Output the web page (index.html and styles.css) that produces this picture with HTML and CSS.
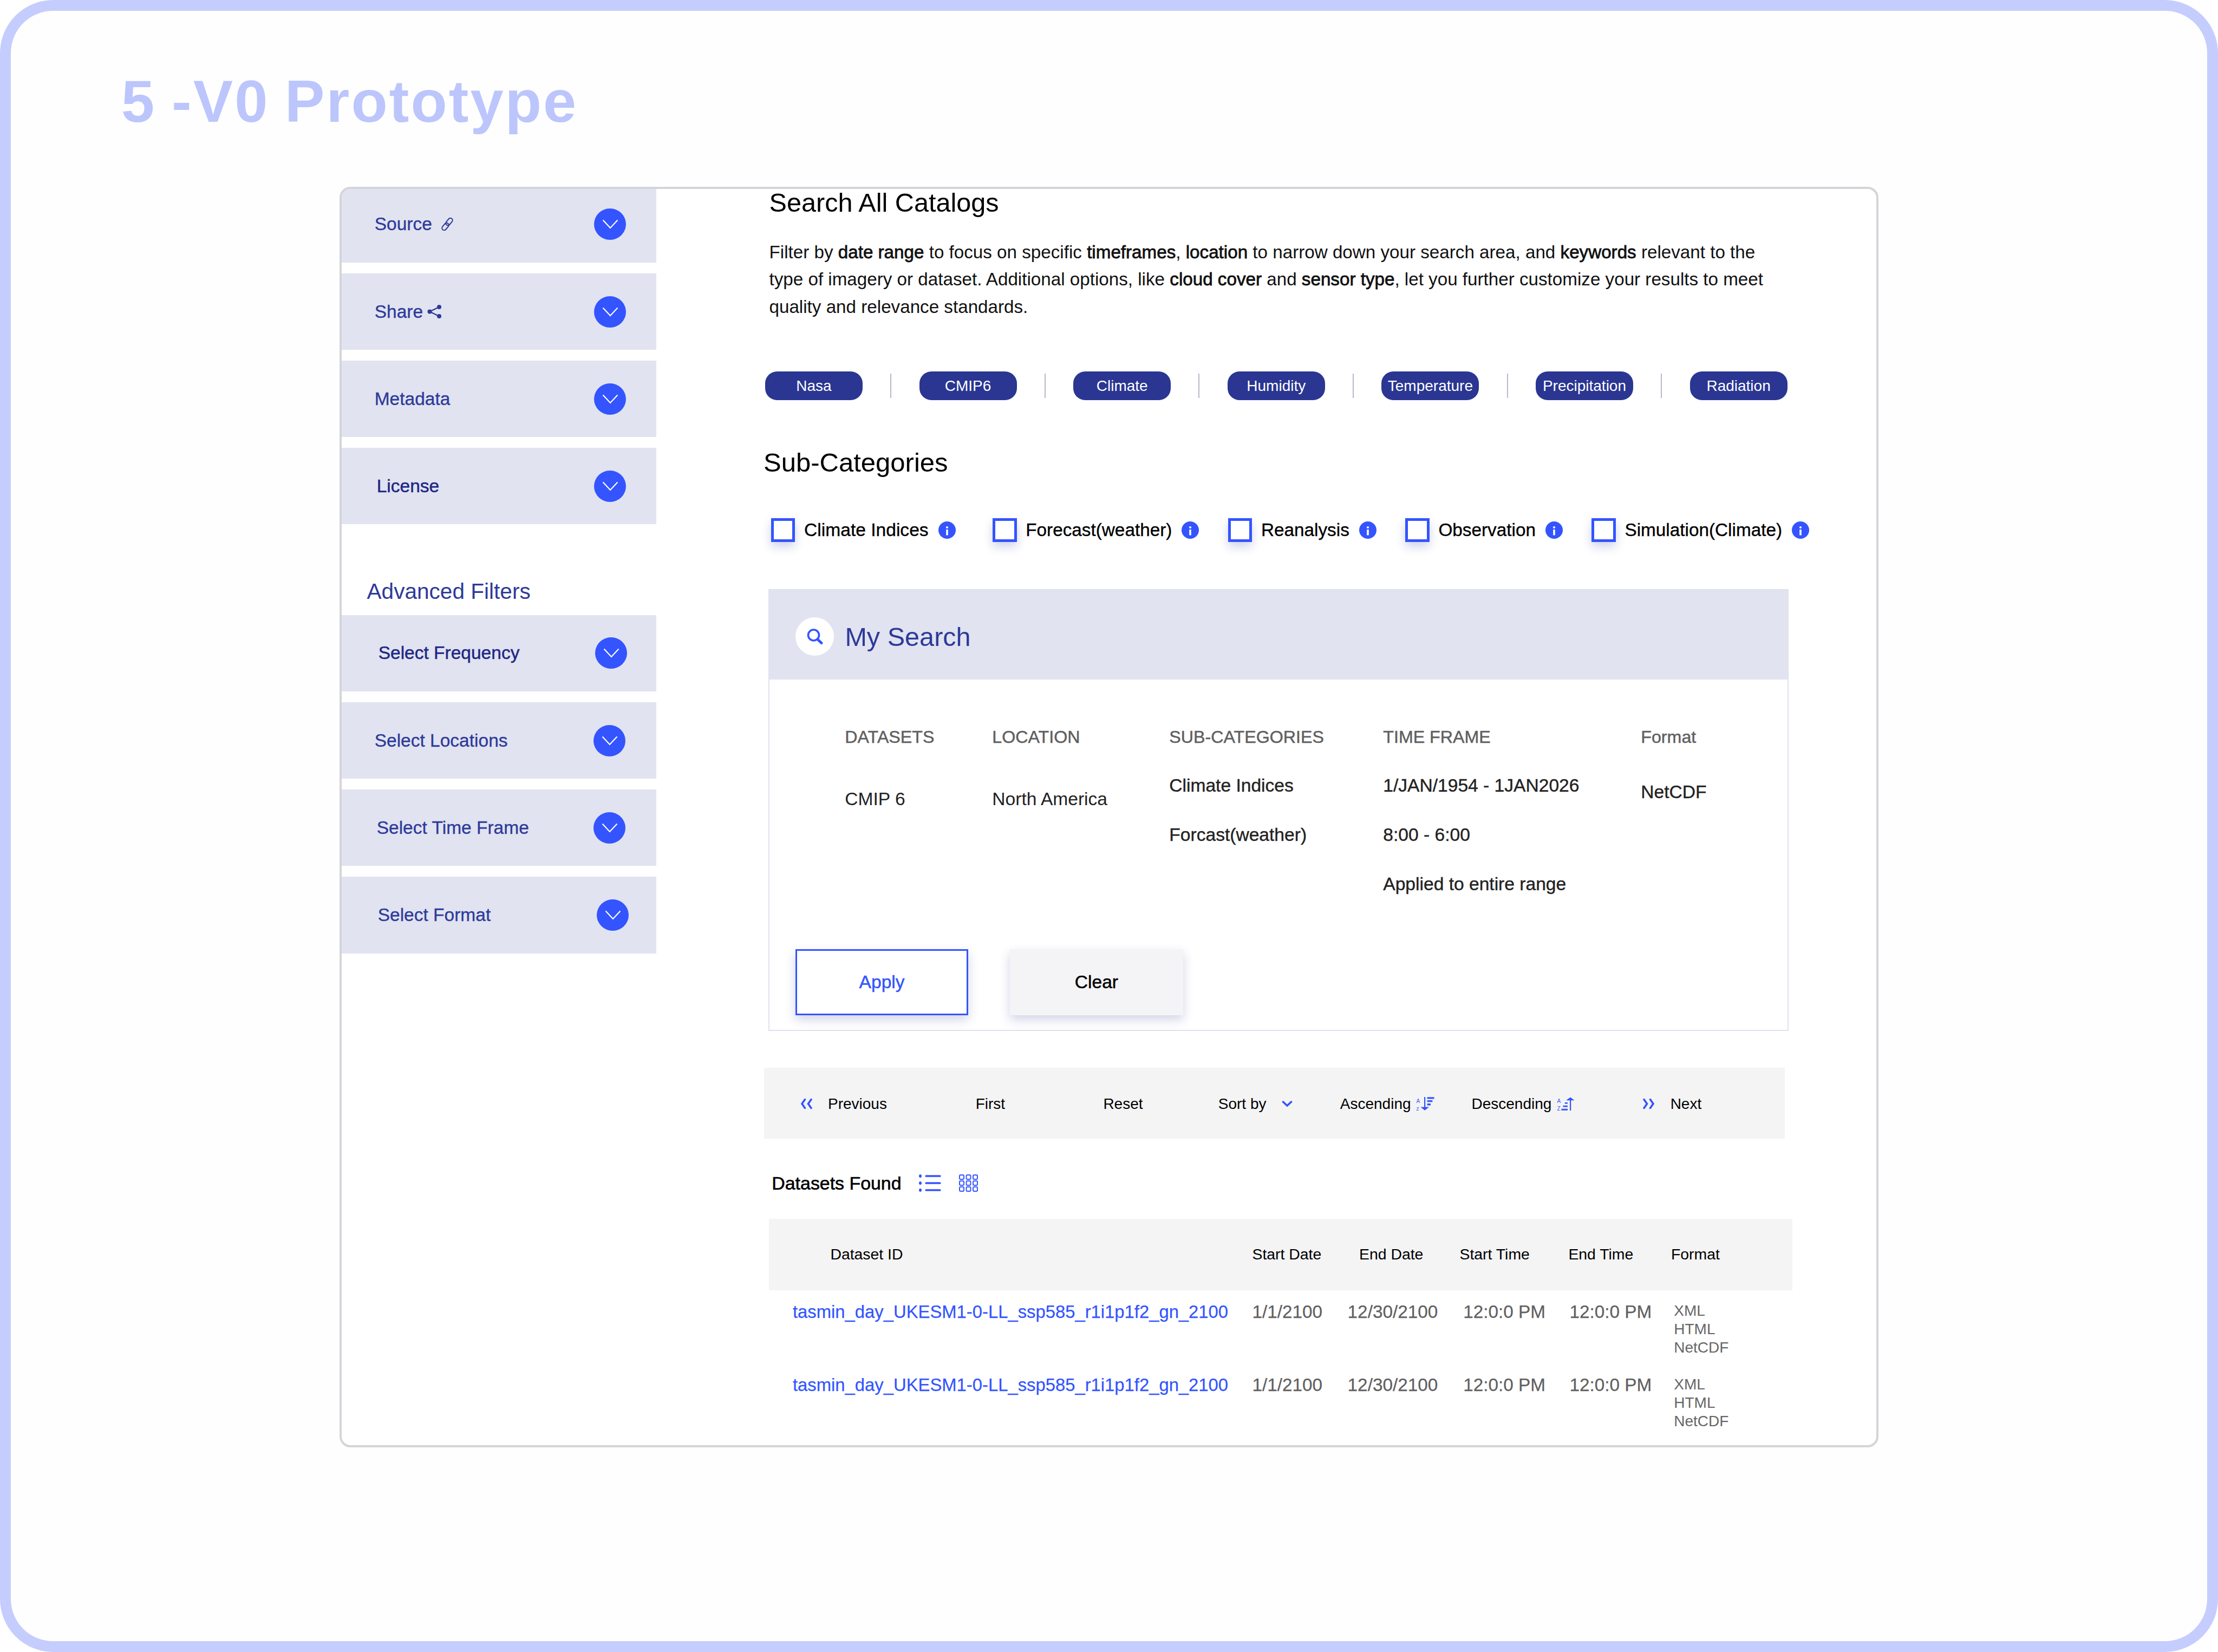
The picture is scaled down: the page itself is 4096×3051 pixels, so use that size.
FILE: index.html
```html
<!DOCTYPE html>
<html lang="en">
<head>
<meta charset="utf-8">
<title>5 -V0 Prototype</title>
<link rel="stylesheet" href="styles.css">
</head>
<body>
<svg class="sprite" aria-hidden="true">
  <symbol id="chev" viewBox="0 0 30 18"><polyline points="1.5,1.5 15,16 28.5,1.5" fill="none" stroke="#fff" stroke-width="2.2"/></symbol>
  <symbol id="info" viewBox="0 0 32 32"><circle cx="16" cy="16" r="16" fill="#3354ff"/><circle cx="16" cy="11" r="2.1" fill="#fff"/><rect x="14.2" y="15" width="3.6" height="10.5" fill="#fff"/></symbol>
</svg>
<main class="frame">
  <h1 class="page-title">5 -V0 Prototype</h1>
  <section class="card">
    <aside class="sidebar">
      <div class="acc acc-first">
        <span class="acc-label">Source
          <svg class="ico-link" viewBox="0 0 24 24"><g fill="none" stroke="#2d3a9a" stroke-width="2"><rect x="11.5" y="0" width="8" height="15" rx="4" transform="rotate(40 15.5 7.5)"/><rect x="4.5" y="9" width="8" height="15" rx="4" transform="rotate(40 8.5 16.5)"/></g></svg>
        </span>
        <span class="acc-btn"><svg class="chev"><use href="#chev"/></svg></span>
      </div>
      <div class="acc">
        <span class="acc-label">Share
          <svg class="ico-share" viewBox="0 0 26 25"><g fill="#2d3a9a"><circle cx="4.5" cy="12.5" r="4"/><circle cx="22" cy="4" r="4"/><circle cx="22" cy="21" r="4"/></g><path d="M22 4 4.5 12.5 22 21" fill="none" stroke="#2d3a9a" stroke-width="2.4"/></svg>
        </span>
        <span class="acc-btn"><svg class="chev"><use href="#chev"/></svg></span>
      </div>
      <div class="acc"><span class="acc-label">Metadata</span><span class="acc-btn"><svg class="chev"><use href="#chev"/></svg></span></div>
      <div class="acc acc-license"><span class="acc-label dark">License</span><span class="acc-btn"><svg class="chev"><use href="#chev"/></svg></span></div>

      <h2 class="side-heading">Advanced Filters</h2>
      <div class="filters">
        <div class="acc acc-freq"><span class="acc-label dark">Select Frequency</span><span class="acc-btn"><svg class="chev"><use href="#chev"/></svg></span></div>
        <div class="acc acc-loc"><span class="acc-label">Select Locations</span><span class="acc-btn"><svg class="chev"><use href="#chev"/></svg></span></div>
        <div class="acc acc-time"><span class="acc-label">Select Time Frame</span><span class="acc-btn"><svg class="chev"><use href="#chev"/></svg></span></div>
        <div class="acc acc-format"><span class="acc-label">Select Format</span><span class="acc-btn"><svg class="chev"><use href="#chev"/></svg></span></div>
      </div>
    </aside>

    <div class="content">
      <h2 class="search-title">Search All Catalogs</h2>
      <p class="intro">Filter by <b>date range</b> to focus on specific <b>timeframes</b>, <b>location</b> to narrow down your search area, and <b>keywords</b> relevant to the<br>type of imagery or dataset. Additional options, like <b>cloud cover</b> and <b>sensor type</b>, let you further customize your results to meet<br>quality and relevance standards.</p>

      <div class="pills">
        <span class="pill">Nasa</span><i class="sep"></i>
        <span class="pill">CMIP6</span><i class="sep"></i>
        <span class="pill">Climate</span><i class="sep"></i>
        <span class="pill">Humidity</span><i class="sep"></i>
        <span class="pill">Temperature</span><i class="sep"></i>
        <span class="pill">Precipitation</span><i class="sep"></i>
        <span class="pill">Radiation</span>
      </div>

      <h2 class="sub-title">Sub-Categories</h2>
      <div class="checks">
        <label class="check check-wide"><span class="box-input"></span><span>Climate Indices</span><svg class="info"><use href="#info"/></svg></label>
        <label class="check"><span class="box-input"></span><span>Forecast(weather)</span><svg class="info"><use href="#info"/></svg></label>
        <label class="check"><span class="box-input"></span><span>Reanalysis</span><svg class="info"><use href="#info"/></svg></label>
        <label class="check"><span class="box-input"></span><span>Observation</span><svg class="info"><use href="#info"/></svg></label>
        <label class="check"><span class="box-input"></span><span>Simulation(Climate)</span><svg class="info"><use href="#info"/></svg></label>
      </div>

      <section class="my-search">
        <header class="ms-head">
          <span class="ms-icon"><svg class="ico-search" viewBox="0 0 30 30"><circle cx="12.5" cy="12" r="10" fill="none" stroke="#3354ff" stroke-width="3.6"/><path d="M20 20l7 6.5" stroke="#3354ff" stroke-width="5" stroke-linecap="round"/></svg></span>
          <span class="ms-title">My Search</span>
        </header>
        <div class="ms-cols">
          <div class="ms-col c1"><div class="ms-h">DATASETS</div><div class="ms-v v-a">CMIP 6</div></div>
          <div class="ms-col c2"><div class="ms-h">LOCATION</div><div class="ms-v v-a">North America</div></div>
          <div class="ms-col c3"><div class="ms-h">SUB-CATEGORIES</div><div class="ms-v v-b strong">Climate Indices</div><div class="ms-v v-n strong">Forcast(weather)</div></div>
          <div class="ms-col c4"><div class="ms-h">TIME FRAME</div><div class="ms-v v-b strong">1/JAN/1954 - 1JAN2026</div><div class="ms-v v-n strong">8:00 - 6:00</div><div class="ms-v v-n strong">Applied to entire range</div></div>
          <div class="ms-col c5"><div class="ms-h">Format</div><div class="ms-v v-c strong">NetCDF</div></div>
        </div>
        <div class="ms-actions">
          <button class="btn btn-apply">Apply</button>
          <button class="btn btn-clear">Clear</button>
        </div>
      </section>

      <nav class="toolbar">
        <span class="tb-item gap-prev"><svg class="ico-dbl" viewBox="0 0 24 19"><path d="M9.5 1.5 4 9.5l5.5 8M21 1.5 15.5 9.5l5.500 8" fill="none" stroke="#3354ff" stroke-width="3.6" stroke-linecap="round"/></svg>Previous</span>
        <span class="tb-item">First</span>
        <span class="tb-item">Reset</span>
        <span class="tb-item gap-sort">Sort by<svg class="ico-down" viewBox="0 0 20 11"><path d="M2.500 2 10 9l7.500-7" fill="none" stroke="#3354ff" stroke-width="3.6" stroke-linecap="round"/></svg></span>
        <span class="tb-item gap-az">Ascending<svg class="ico-az" viewBox="0 0 34 25"><text class="az" x="0.500" y="10.500">A</text><text class="az" x="0.500" y="24.500">z</text><rect x="15" y="0" width="2.200" height="19" fill="#3354ff"/><path d="M8.400 18.600h15.600l-7.800 6.200z" fill="#3354ff"/><path d="M20.600 0.200h12.900v3.200H20.600zM20.600 6h9.800v3.200h-9.800zM20.600 12H27v3.500h-6.400z" fill="#3354ff"/></svg></span>
        <span class="tb-item gap-az">Descending<svg class="ico-az" viewBox="0 0 34 25"><text class="az" x="0.500" y="10.500">A</text><text class="az" x="0.500" y="24.500">Z</text><rect x="24" y="4" width="2.200" height="21" fill="#3354ff"/><path d="M17 6.300 25 0.500l7.500 5.800z" fill="#3354ff"/><path d="M14.800 10H20v2.600h-5.200zM11.500 15.700H20v2.800h-8.500zM8.400 21.700H20v3H8.400z" fill="#3354ff"/></svg></span>
        <span class="tb-item gap-prev"><svg class="ico-dbl" viewBox="0 0 24 19"><path d="M3 1.500 8.500 9.500 3 17.500M14.500 1.500 20 9.500l-5.500 8" fill="none" stroke="#3354ff" stroke-width="3.6" stroke-linecap="round"/></svg>Next</span>
      </nav>

      <div class="found">
        <span class="found-label">Datasets Found</span>
        <svg class="ico-list" viewBox="0 0 41 32"><g fill="#3354ff"><ellipse cx="2.500" cy="3" rx="2.500" ry="3"/><ellipse cx="2.500" cy="16" rx="2.500" ry="3"/><ellipse cx="2.500" cy="29" rx="2.500" ry="3"/><rect x="11.500" y="1.200" width="29" height="3.600" rx="1.500"/><rect x="11.500" y="14.200" width="29" height="3.600" rx="1.500"/><rect x="11.500" y="27.200" width="29" height="3.600" rx="1.500"/></g></svg>
        <svg class="ico-grid" viewBox="0 0 35 32"><g fill="none" stroke="#3354ff" stroke-width="2"><rect x="1" y="1" width="8" height="8" rx="2"/><rect x="13.500" y="1" width="8" height="8" rx="2"/><rect x="26" y="1" width="8" height="8" rx="2"/><rect x="1" y="12" width="8" height="8" rx="2"/><rect x="13.500" y="12" width="8" height="8" rx="2"/><rect x="26" y="12" width="8" height="8" rx="2"/><rect x="1" y="23" width="8" height="8" rx="2"/><rect x="13.500" y="23" width="8" height="8" rx="2"/><rect x="26" y="23" width="8" height="8" rx="2"/></g></svg>
      </div>

      <div class="table">
        <div class="thead">
          <span>Dataset ID</span><span>Start Date</span><span>End Date</span><span>Start Time</span><span>End Time</span><span>Format</span>
        </div>
        <div class="trow">
          <a class="ds-link">tasmin_day_UKESM1-0-LL_ssp585_r1i1p1f2_gn_2100</a><span>1/1/2100</span><span>12/30/2100</span><span>12:0:0 PM</span><span>12:0:0 PM</span>
          <div class="fmt"><div>XML</div><div>HTML</div><div>NetCDF</div></div>
        </div>
        <div class="trow">
          <a class="ds-link">tasmin_day_UKESM1-0-LL_ssp585_r1i1p1f2_gn_2100</a><span>1/1/2100</span><span>12/30/2100</span><span>12:0:0 PM</span><span>12:0:0 PM</span>
          <div class="fmt"><div>XML</div><div>HTML</div><div>NetCDF</div></div>
        </div>
      </div>
    </div>
  </section>
</main>
</body>
</html>
```

FILE: styles.css
```css
* { box-sizing: border-box; }
html, body { margin: 0; padding: 0; background: #fff; }
body { font-family: "Liberation Sans", Arial, sans-serif; color: #000; }
.sprite { display: none; }

.frame {
  width: 4096px; height: 3051px;
  border: 20.5px solid #c5cdfe;
  border-radius: 98px;
  background: #fefefe;
  padding: 106.9px 0 0 0;
  overflow: hidden;
}
.page-title {
  margin: 0 0 0 204px;
  font-size: 110px; line-height: 120px; font-weight: 700;
  letter-spacing: 3.1px;
  word-spacing: -5px;
  color: #bcc6fc;
}

.card {
  margin: 98.1px 0 0 607px;
  width: 2842px; height: 2328px;
  border: 4px solid #d3d5d9;
  border-radius: 20px;
  background: #fff;
  overflow: hidden;
  display: flex;
}

/* sidebar */
.sidebar { width: 581px; flex: none; }
.acc {
  height: 140.5px;
  margin-bottom: 20.5px;
  background: #e1e3f0;
  display: flex; align-items: center; justify-content: space-between;
  padding: 0 56px 0 60.7px;
}
.acc-first { height: 136px; padding-bottom: 5px; }
.acc-license { padding-left: 64.700px; margin-bottom: 0; }
.acc-label {
  font-size: 33.5px; color: #2d3a9a;
  -webkit-text-stroke: 0.35px currentColor;
  display: flex; align-items: center; gap: 10px;
}
.acc-label.dark { color: #1e2785; -webkit-text-stroke: 0.5px currentColor; }
.acc-btn {
  width: 59px; height: 58px; border-radius: 50%;
  background: #3354ff;
  display: flex; align-items: center; justify-content: center;
}
.chev { width: 30px; height: 18px; }
.ico-link { width: 24px; height: 24px; margin-left: 6px; }
.ico-share { width: 26px; height: 25px; margin-left: -2px; }

.side-heading {
  margin: 100px 0 19.6px 46.5px;
  font-size: 40.6px; line-height: 48px; font-weight: 400; color: #2d3a9a;
}
.filters { display: flex; flex-direction: column; gap: 20px; }
.filters .acc { height: 141.3px; margin-bottom: 0; }
.acc-freq.acc { padding: 0 54px 0 67.700px; }
.acc-loc.acc { padding: 0 57px 0 60.700px; }
.acc-time.acc { padding: 0 57px 0 64.700px; }
.acc-format.acc { padding: 0 51px 0 66.700px; }

/* content */
.content { flex: 1; min-width: 0; padding-left: 198px; }
.search-title {
  margin: -1px 0 0 10.500px;
  font-size: 48.6px; line-height: 52px; font-weight: 400;
}
.intro {
  margin: 40.7px 0 0 10.500px;
  font-size: 33.2px; line-height: 50.5px; color: #111;
  white-space: nowrap;
}
.intro b { font-weight: 400; -webkit-text-stroke: 0.8px currentColor; }

.pills {
  margin: 94.3px 0 0 3px;
  display: flex; align-items: center; gap: 51.3px;
}
.pill {
  width: 180px; height: 52.5px;
  border-radius: 22px;
  background: #2a3692; color: #fff;
  font-size: 28px;
  display: flex; align-items: center; justify-content: center;
}
.sep { display: block; width: 2px; height: 45px; background: #b6b9ca; }

.sub-title {
  margin: 87.4px 0 0 0.100px;
  font-size: 49px; line-height: 56px; font-weight: 400;
}

.checks {
  margin: 74.6px 0 0 14px;
  display: flex; align-items: center; gap: 53.500px;
}
.check {
  display: flex; align-items: center;
  font-size: 33.3px; line-height: 44.400px;
  -webkit-text-stroke: 0.35px currentColor;
}
.check-wide { margin-right: 15px; font-size: 33.6px; }
.box-input {
  width: 44.400px; height: 44.400px;
  border: 5px solid #3354ff;
  background: #fff;
  box-shadow: 0 9px 18px rgba(45, 60, 170, .22);
  margin-right: 16.700px;
}
.info { width: 32px; height: 32px; margin-left: 18px; }

/* my search */
.my-search {
  margin: 86.600px 0 0 9.300px;
  width: 1884px;
  border: 2px solid #dfe1f0;
  padding-bottom: 27.400px;
}
.ms-head {
  height: 165.400px;
  background: #e1e3f0;
  display: flex; align-items: center; gap: 20.300px;
  padding: 6px 0 0 47.800px;
}
.ms-icon {
  width: 71px; height: 71px; border-radius: 50%;
  background: #fff;
  display: flex; align-items: center; justify-content: center;
}
.ico-search { width: 30px; height: 30px; }
.ms-title { font-size: 48.6px; line-height: 56px; color: #2d3a9a; }
.ms-cols { display: flex; padding: 86px 0 0 139px; }
.c1 { width: 272px; }
.c2 { width: 327px; }
.c3 { width: 395px; }
.c4 { width: 476px; }
.ms-h {
  font-size: 32.200px; line-height: 40px; color: #5f5f60;
  -webkit-text-stroke: 0.5px currentColor;
}
.ms-v { font-size: 33.6px; line-height: 40px; color: #222; white-space: nowrap; }
.ms-v.strong { -webkit-text-stroke: 0.4px currentColor; }
.v-a { margin-top: 74.500px; }
.v-b { margin-top: 49.500px; }
.v-n { margin-top: 51px; }
.v-c { margin-top: 61.900px; }
.ms-actions { display: flex; gap: 76.800px; padding: 100.600px 0 0 47.800px; }
.btn {
  height: 121.600px; padding: 0; margin: 0;
  font: 400 33.600px "Liberation Sans", Arial, sans-serif;
  -webkit-text-stroke: 0.5px currentColor;
  box-shadow: 0 8px 18px rgba(50, 60, 140, .22);
}
.btn-apply { width: 319px; background: #fff; color: #3354ff; border: 3px solid #3354ff; }
.btn-clear { width: 320px; background: #f4f4f6; color: #000; border: 0; }

/* toolbar */
.toolbar {
  margin: 67.300px 0 0 1px;
  width: 1885.300px; height: 131.200px;
  background: #f4f4f5;
  display: grid;
  grid-template-columns: 324.400px 235.700px 212.400px 225px 242.700px 315.500px 1fr;
  align-items: center;
  padding: 3px 0 0 66.300px;
  font-size: 28px;
}
.tb-item { display: flex; align-items: center; white-space: nowrap; }
.gap-prev { gap: 27.700px; }
.gap-sort { gap: 29px; }
.gap-az { gap: 9.400px; }
.ico-dbl { width: 24px; height: 19px; }
.ico-down { width: 20px; height: 11px; }
.ico-az { width: 34px; height: 25px; }
.az { font-size: 10px; fill: #3354ff; font-family: "Liberation Sans", Arial, sans-serif; }

.found {
  margin: 65.900px 0 0 15.300px;
  height: 32.500px;
  display: flex; align-items: center;
}
.found-label { font-size: 33.900px; -webkit-text-stroke: 0.6px currentColor; white-space: nowrap; width: 271.700px; }
.ico-list { width: 41px; height: 32px; }
.ico-grid { width: 35px; height: 32px; margin-left: 33px; }

.table { margin: 49.800px 0 0 10px; width: 1890px; }
.thead {
  height: 131.600px;
  background: #f4f4f5;
  display: grid;
  grid-template-columns: 779.100px 197.500px 185.500px 200.900px 189.600px 1fr;
  align-items: center;
  padding-left: 113.400px;
  font-size: 28.400px;
  white-space: nowrap;
}
.trow {
  height: 135.300px;
  display: grid;
  grid-template-columns: 848.500px 176.100px 213.600px 196.200px 192.900px 1fr;
  align-items: start;
  padding: 20.400px 0 0 44px;
  font-size: 33.300px; line-height: 40px; color: #606061;
  white-space: nowrap;
  -webkit-text-stroke: 0.25px currentColor;
}
.ds-link { font-size: 32.800px; color: #3354ff; text-decoration: none; }
.fmt { font-size: 28px; line-height: 34px; color: #666; margin-top: 1.200px; -webkit-text-stroke: 0; }
```
